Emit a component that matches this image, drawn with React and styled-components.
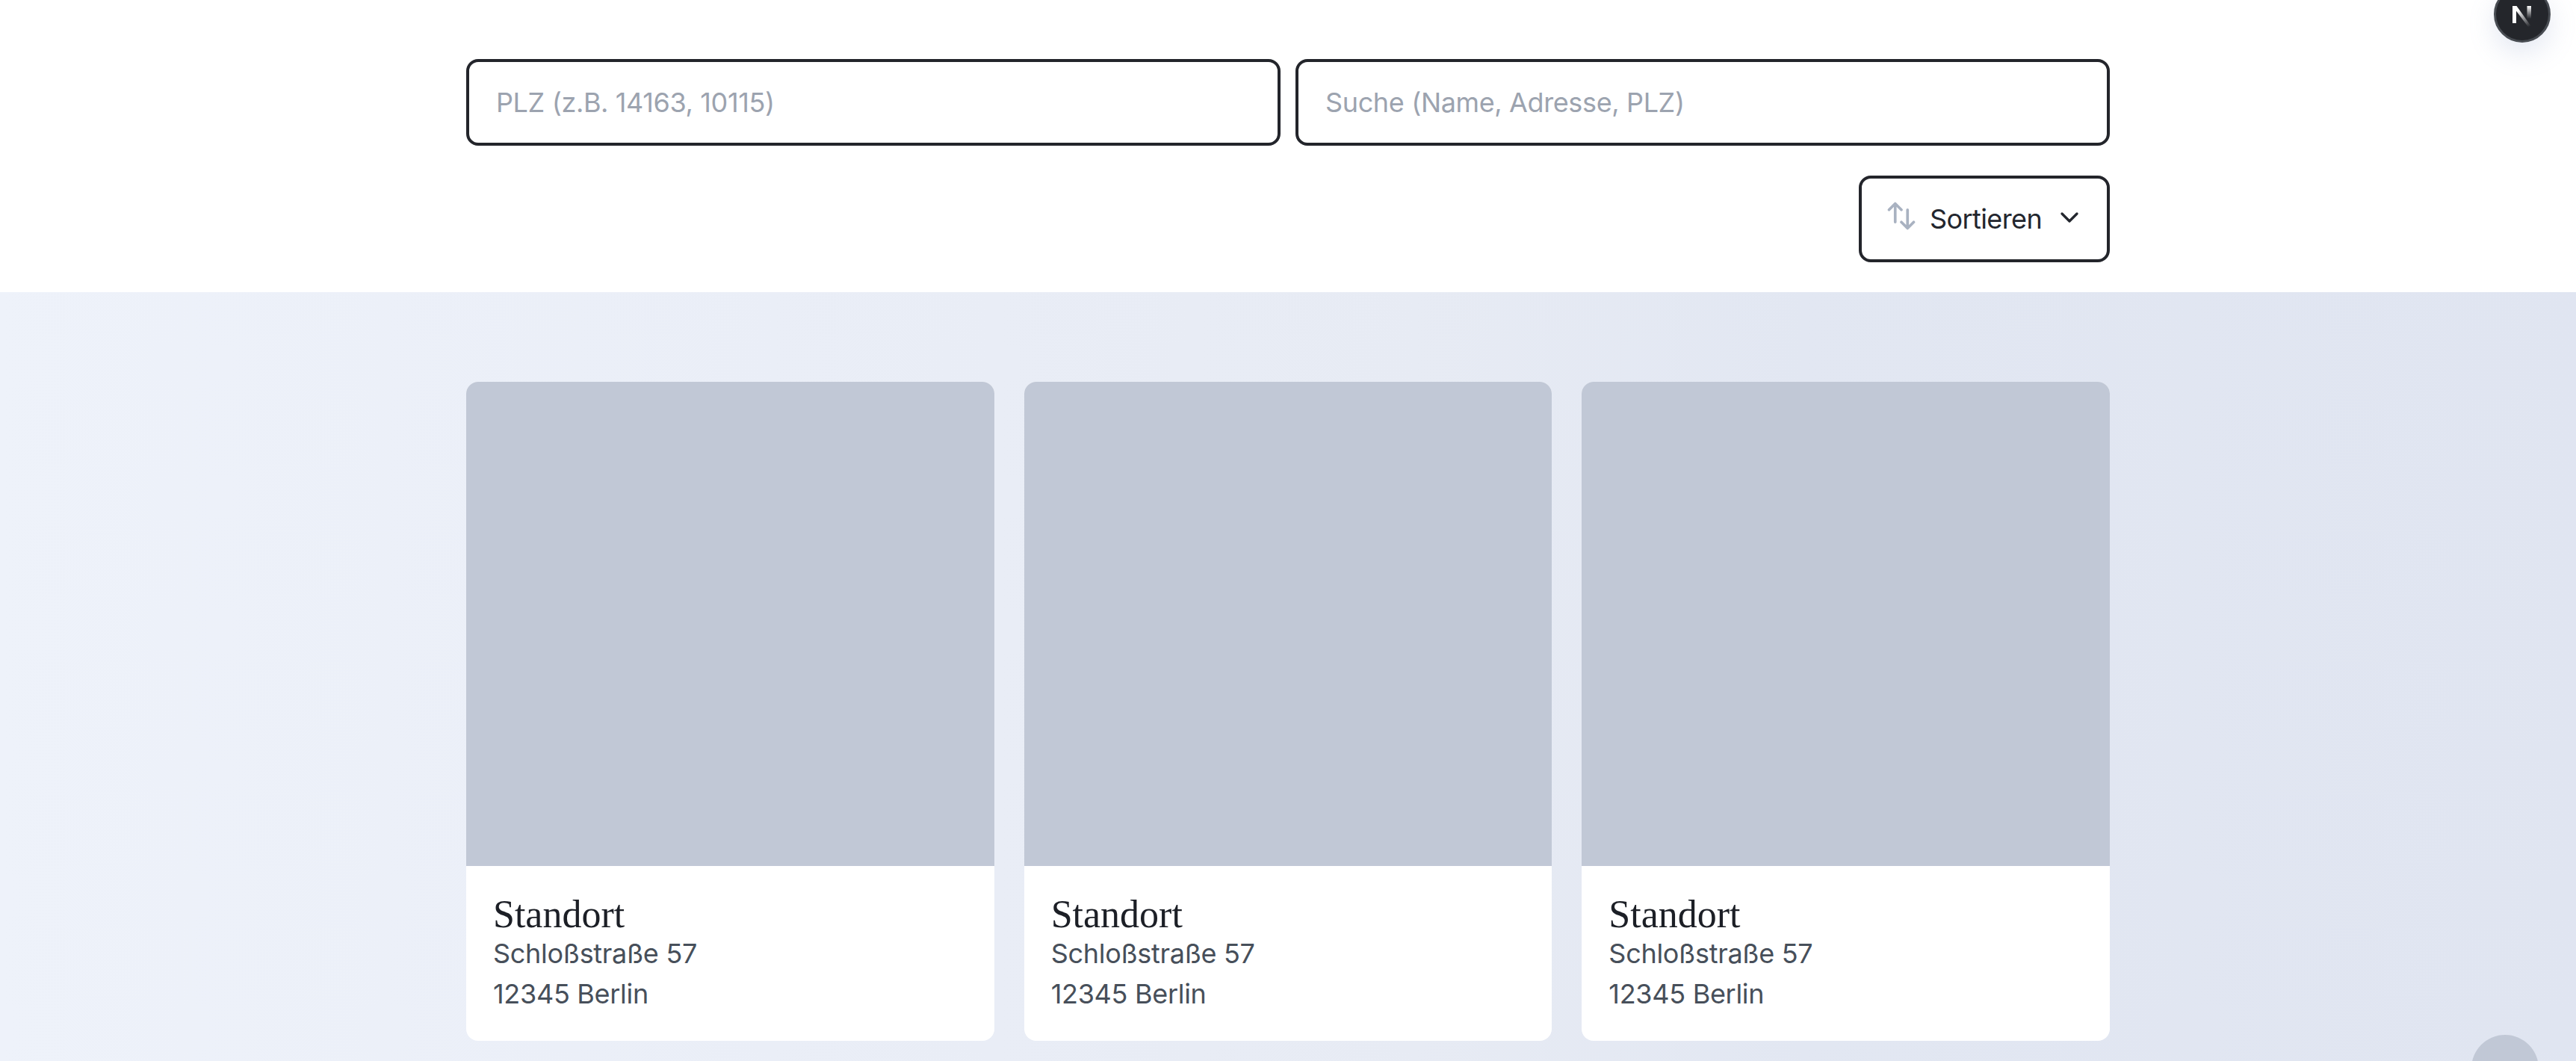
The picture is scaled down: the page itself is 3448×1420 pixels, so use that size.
import React from "react";
import styled, { createGlobalStyle } from "styled-components";
import { ChevronDown } from "lucide-react";
import { HiOutlineArrowsUpDown } from "react-icons/hi2";

const GlobalStyle = createGlobalStyle`
  html, body {
    margin: 0;
    padding: 0;
    height: 100%;
    overflow: hidden;
    background: #ffffff;
    font-family: Inter, "Liberation Sans", sans-serif;
  }
  * {
    box-sizing: border-box;
  }
`;

const Page = styled.div`
  display: flex;
  flex-direction: column;
  height: 1420px;
`;

const FilterBar = styled.section`
  background: #ffffff;
  padding: 79px 624px 40px;
  display: flex;
  flex-direction: column;
  gap: 40px;
`;

const InputRow = styled.div`
  display: grid;
  grid-template-columns: 1fr 1fr;
  gap: 20px;
`;

const SearchInput = styled.input`
  height: 116px;
  border: 4px solid #23252b;
  border-radius: 16px;
  padding: 0 36px;
  font-family: Inter, sans-serif;
  font-size: 36px;
  letter-spacing: -0.37px;
  color: #1f2937;
  background: #ffffff;
  outline: none;
  &::placeholder {
    color: #9ca3af;
    opacity: 1;
  }
`;

const SortRow = styled.div`
  display: flex;
  justify-content: flex-end;
`;

const SortButton = styled.button`
  height: 116px;
  width: 336px;
  border: 4px solid #23252b;
  border-radius: 16px;
  background: #ffffff;
  padding: 0 0 0 31px;
  display: flex;
  align-items: center;
  font-family: Inter, sans-serif;
  font-size: 36px;
  letter-spacing: -0.6px;
  color: #23262e;
`;

const SortIcon = styled(HiOutlineArrowsUpDown)`
  width: 44px;
  height: 44px;
  margin-bottom: 9px;
  color: #a9b2c1;
  flex-shrink: 0;
  path {
    stroke-width: 2;
  }
`;

const SortLabel = styled.span`
  margin-left: 16px;
  margin-right: 17px;
`;

const Chevron = styled(ChevronDown)`
  width: 40px;
  height: 40px;
  margin-bottom: 5px;
  color: #23262e;
  flex-shrink: 0;
`;

const CardSection = styled.section`
  flex: 1;
  background: linear-gradient(
    90deg,
    #eef2fa 0%,
    #eaeef7 30%,
    #e7ebf4 55%,
    #e2e7f2 70%,
    #e0e5f1 100%
  );
  padding: 120px 624px 0;
`;

const CardGrid = styled.div`
  display: grid;
  grid-template-columns: repeat(3, 1fr);
  gap: 40px;
`;

const Card = styled.article`
  background: #ffffff;
  border-radius: 16px;
  overflow: hidden;
  height: 882px;
  display: flex;
  flex-direction: column;
`;

const CardImage = styled.div`
  height: 648px;
  background: #c1c8d6;
`;

const CardBody = styled.div`
  padding: 39px 36px 0;
`;

const CardTitle = styled.h3`
  margin: 0;
  font-family: "Liberation Serif", serif;
  font-weight: 400;
  font-size: 52px;
  line-height: 51px;
  color: #1c1f26;
`;

const CardLine = styled.p`
  margin: 0;
  font-size: 36px;
  line-height: 54px;
  letter-spacing: -0.3px;
  color: #474f5a;
`;

const DevBadge = styled.div`
  position: fixed;
  left: 3338px;
  top: -19px;
  width: 76px;
  height: 76px;
  border-radius: 50%;
  background: #24262b;
  border: 3px solid #484c52;
  box-shadow: 0 14px 36px rgba(120, 140, 190, 0.2);
  display: flex;
  align-items: center;
  justify-content: center;
`;

const ScrollButton = styled.div`
  position: fixed;
  left: 3308px;
  top: 1385px;
  width: 90px;
  height: 90px;
  border-radius: 50%;
  background: #c1c8d6;
`;

const NextLogo = () => (
  <svg width="32" height="34" viewBox="0 0 32 34" fill="none">
    <defs>
      <linearGradient id="next-a" x1="14" y1="10" x2="27" y2="33" gradientUnits="userSpaceOnUse">
        <stop stopColor="#ffffff" />
        <stop offset="1" stopColor="#ffffff" stopOpacity="0" />
      </linearGradient>
      <linearGradient id="next-b" x1="25" y1="6" x2="25" y2="23" gradientUnits="userSpaceOnUse">
        <stop stopColor="#ffffff" />
        <stop offset="1" stopColor="#ffffff" stopOpacity="0" />
      </linearGradient>
    </defs>
    <path d="M3 6h5v23H3z" fill="#ffffff" />
    <path d="M3 6h5.5l20 28H24z" fill="url(#next-a)" />
    <path d="M22.5 6H28v17h-5.5z" fill="url(#next-b)" />
  </svg>
);

const locations = [1, 2, 3];

export default function App() {
  return (
    <Page>
      <GlobalStyle />
      <FilterBar>
        <InputRow>
          <SearchInput placeholder="PLZ (z.B. 14163, 10115)" />
          <SearchInput placeholder="Suche (Name, Adresse, PLZ)" />
        </InputRow>
        <SortRow>
          <SortButton>
            <SortIcon />
            <SortLabel>Sortieren</SortLabel>
            <Chevron />
          </SortButton>
        </SortRow>
      </FilterBar>
      <CardSection>
        <CardGrid>
          {locations.map((id) => (
            <Card key={id}>
              <CardImage />
              <CardBody>
                <CardTitle>Standort</CardTitle>
                <CardLine>Schloßstraße 57</CardLine>
                <CardLine>12345 Berlin</CardLine>
              </CardBody>
            </Card>
          ))}
        </CardGrid>
      </CardSection>
      <DevBadge>
        <NextLogo />
      </DevBadge>
      <ScrollButton />
    </Page>
  );
}
